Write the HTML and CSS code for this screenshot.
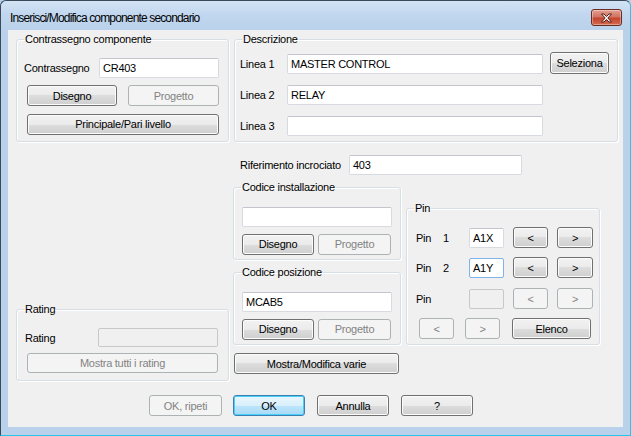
FILE: index.html
```html
<!DOCTYPE html>
<html lang="it">
<head>
    <meta charset="UTF-8">
    <title>Inserisci/Modifica componente secondario</title>
    <link rel="stylesheet" href="styles.css">
</head>
<body>
    <div class="window">
        <div class="titlebar">
            <span class="title">Inserisci/Modifica componente secondario</span>
            <button class="close" title="Chiudi">
                <svg width="29" height="16" viewBox="0 0 29 16">
                    <path d="M9.5 4 L12 4 L14.5 6.5 L17 4 L19.5 4 L15.8 8 L19.5 12 L17 12 L14.5 9.5 L12 12 L9.5 12 L13.2 8 Z" fill="#ffffff" stroke="#5a1a14" stroke-width="1" stroke-linejoin="round"/>
                </svg>
            </button>
        </div>

        <div class="client">
            <!-- top row -->
            <div class="top-row">
                <fieldset class="group g-contrassegno">
                    <legend>Contrassegno componente</legend>
                    <div class="group-body">
                        <div class="row">
                            <label class="lbl lbl-grow">Contrassegno</label>
                            <input class="txt w-contr" type="text" value="CR403">
                        </div>
                        <div class="row row-split mt7">
                            <button class="btn w90">Disegno</button>
                            <button class="btn w91" disabled>Progetto</button>
                        </div>
                        <div class="row mt8">
                            <button class="btn full">Principale/Pari livello</button>
                        </div>
                    </div>
                </fieldset>

                <fieldset class="group g-descrizione">
                    <legend>Descrizione</legend>
                    <div class="group-body">
                        <div class="row">
                            <label class="lbl w-linea">Linea 1</label>
                            <input class="txt w-desc" type="text" value="MASTER CONTROL">
                            <button class="btn btn-sel">Seleziona</button>
                        </div>
                        <div class="row mt11">
                            <label class="lbl w-linea">Linea 2</label>
                            <input class="txt w-desc" type="text" value="RELAY">
                        </div>
                        <div class="row mt11">
                            <label class="lbl w-linea">Linea 3</label>
                            <input class="txt w-desc" type="text" value="">
                        </div>
                    </div>
                </fieldset>
            </div>

            <!-- middle area -->
            <div class="mid-area">
                <div class="left-col">
                    <fieldset class="group g-rating">
                        <legend>Rating</legend>
                        <div class="group-body">
                            <div class="row row-19">
                                <label class="lbl lbl-grow">Rating</label>
                                <input class="txt w-rating" type="text" disabled>
                            </div>
                            <div class="row mt6">
                                <button class="btn full h20" disabled>Mostra tutti i rating</button>
                            </div>
                        </div>
                    </fieldset>
                </div>

                <div class="right-col">
                    <div class="row rif-row">
                        <label class="lbl w-rif">Riferimento incrociato</label>
                        <input class="txt w-rif-txt" type="text" value="403">
                    </div>

                    <div class="lower">
                        <div class="codes-col">
                            <fieldset class="group g-code">
                                <legend>Codice installazione</legend>
                                <div class="group-body">
                                    <input class="txt w-code" type="text" value="">
                                    <div class="row code-btns">
                                        <button class="btn w72">Disegno</button>
                                        <button class="btn w73" disabled>Progetto</button>
                                    </div>
                                </div>
                            </fieldset>
                            <fieldset class="group g-code g-pos">
                                <legend>Codice posizione</legend>
                                <div class="group-body">
                                    <input class="txt w-code" type="text" value="MCAB5">
                                    <div class="row code-btns">
                                        <button class="btn w72">Disegno</button>
                                        <button class="btn w73" disabled>Progetto</button>
                                    </div>
                                </div>
                            </fieldset>
                            <button class="btn btn-varie">Mostra/Modifica varie</button>
                        </div>

                        <fieldset class="group g-pin">
                            <legend>Pin</legend>
                            <div class="group-body">
                                <div class="row pin-row">
                                    <label class="lbl pin-lbl">Pin <span class="pin-num">1</span></label>
                                    <input class="txt w-pin" type="text" value="A1X">
                                    <button class="btn w35 ml9">&lt;</button>
                                    <button class="btn w36 ml9">&gt;</button>
                                </div>
                                <div class="row pin-row mt9">
                                    <label class="lbl pin-lbl">Pin <span class="pin-num">2</span></label>
                                    <input class="txt w-pin focus" type="text" value="A1Y">
                                    <button class="btn w35 ml9">&lt;</button>
                                    <button class="btn w36 ml9">&gt;</button>
                                </div>
                                <div class="row pin-row mt10">
                                    <label class="lbl pin-lbl">Pin</label>
                                    <input class="txt w-pin" type="text" disabled>
                                    <button class="btn w35 ml9" disabled>&lt;</button>
                                    <button class="btn w36 ml9" disabled>&gt;</button>
                                </div>
                                <div class="row pin-row mt9">
                                    <button class="btn w35 ml3" disabled>&lt;</button>
                                    <button class="btn w35 ml11" disabled>&gt;</button>
                                    <button class="btn w79 ml12">Elenco</button>
                                </div>
                            </div>
                        </fieldset>
                    </div>
                </div>
            </div>

            <!-- dialog buttons -->
            <div class="dlg-buttons">
                <button class="btn w73" disabled>OK, ripeti</button>
                <button class="btn btn-default w72">OK</button>
                <button class="btn w72">Annulla</button>
                <button class="btn w72">?</button>
            </div>
        </div>
    </div>
</body>
</html>
```

FILE: styles.css
```css
* {
    box-sizing: border-box;
}

body {
    margin: 0;
    background-color: #b9d1ea;
    font-family: "Liberation Sans", Arial, sans-serif;
    font-size: 11px;
    letter-spacing: -0.25px;
    color: #000000;
}

.window {
    width: 631px;
    height: 436px;
    background-color: #b9d1ea;
    border: 1px solid #3a4a5c;
    border-right-color: #27c6e8;
    border-bottom-color: #27c6e8;
    border-radius: 6px 6px 0 0;
    padding: 0 7px 8px 7px;
    display: flex;
    flex-direction: column;
}

.titlebar {
    height: 29px;
    margin: 0 -7px;
    padding: 0 9px 0 9px;
    display: flex;
    align-items: flex-start;
    justify-content: space-between;
    background: linear-gradient(#d3e3f4 0%, #c2d7ef 45%, #b9d1ea 100%);
    border-radius: 6px 6px 0 0;
}

.title {
    font-family: "Liberation Sans", Arial, sans-serif;
    font-size: 12px;
    line-height: 15px;
    letter-spacing: -0.85px;
    color: #000000;
    margin-top: 10px;
}

.close {
    width: 31px;
    height: 17px;
    padding: 0;
    margin: 8px -1px 0 0;
    border: 1px solid #6b2b22;
    border-radius: 3px;
    background: linear-gradient(#e3a193 0%, #d17361 45%, #c3452f 55%, #d46a4f 100%);
    box-shadow: inset 0 0 0 1px rgba(255, 255, 255, 0.35);
    display: flex;
    align-items: center;
    justify-content: center;
}

.client {
    flex: 1;
    background-color: #f0f0f0;
    padding: 3px 0 0 0;
}

/* group boxes */
.group {
    margin: 0;
    padding: 0;
    border: 1px solid #d5dfe5;
    border-radius: 3px;
    box-shadow: inset 1px 1px 0 #ffffff, 1px 1px 0 #ffffff;
    min-width: 0;
}

.group legend {
    font-size: 11px;
    line-height: 13px;
    padding: 0 1px;
    margin-left: 7px;
}

.group-body {
    display: flex;
    flex-direction: column;
}

.row {
    display: flex;
    align-items: center;
    height: 20px;
}

.row-19 {
    height: 19px;
}

.row-split {
    justify-content: space-between;
    height: 21px;
}

.lbl {
    white-space: nowrap;
}

.lbl-grow {
    flex: 1;
}

/* text boxes */
.txt {
    height: 20px;
    border: 1px solid #d7dae0;
    border-top-color: #c2c5cb;
    border-radius: 2px;
    background-color: #ffffff;
    font-family: "Liberation Sans", Arial, sans-serif;
    font-size: 11px;
    letter-spacing: -0.25px;
    color: #000000;
    padding: 0 3px;
    outline: none;
}

.txt:disabled {
    background-color: #f0f0f0;
    border-color: #c8c8c8;
}

.txt.focus {
    border-color: #7eb4ea;
}

/* buttons */
.btn {
    height: 21px;
    padding: 0;
    border: 1px solid #707070;
    border-radius: 3px;
    background: linear-gradient(#f2f2f2 0%, #ebebeb 50%, #dddddd 50%, #cfcfcf 100%);
    box-shadow: inset 0 0 0 1px #fcfcfc;
    font-family: "Liberation Sans", Arial, sans-serif;
    font-size: 11px;
    letter-spacing: -0.25px;
    color: #000000;
    cursor: pointer;
    flex-shrink: 0;
}

.btn:disabled {
    background: #f4f4f4;
    border-color: #adb2b5;
    box-shadow: none;
    color: #838383;
    cursor: default;
}

.btn-default {
    border-color: #3c7fb1;
    background: linear-gradient(#eaf6fd 0%, #d9f0fc 50%, #bee6fd 50%, #a7d9f5 100%);
    box-shadow: inset 0 0 0 1px #48d0fb;
}

.full { width: 100%; }
.h20 { height: 20px; }
.w35 { width: 35px; }
.w36 { width: 36px; }
.w72 { width: 72px; }
.w73 { width: 73px; }
.w79 { width: 79px; }
.w90 { width: 90px; }
.w91 { width: 91px; }

.mt6 { margin-top: 6px; }
.mt7 { margin-top: 7px; }
.mt8 { margin-top: 8px; }
.mt9 { margin-top: 9px; }
.mt10 { margin-top: 10px; }
.mt11 { margin-top: 11px; }
.ml3 { margin-left: 3px; }
.ml9 { margin-left: 9px; }
.ml11 { margin-left: 11px; }
.ml12 { margin-left: 12px; }

/* top row */
.top-row {
    display: flex;
    margin-left: 8px;
}

.g-contrassegno {
    width: 213px;
    height: 109px;
}

.g-contrassegno .group-body {
    padding: 12px 9px 0 10px;
}

.g-contrassegno .lbl {
    margin-left: -3px;
}

.w-contr {
    width: 120px;
}

.g-descrizione {
    width: 384px;
    height: 109px;
    margin-left: 5px;
}

.g-descrizione .group-body {
    padding: 8px 0 0 5px;
}

.w-linea { width: 47px; }
.w-desc { width: 256px; }

.btn-sel {
    width: 59px;
    height: 22px;
    margin-left: 7px;
    margin-top: -3px;
}

/* middle area */
.mid-area {
    display: flex;
    height: 239px;
}

.left-col {
    width: 225px;
    padding-left: 8px;
    display: flex;
    flex-direction: column;
    justify-content: flex-end;
}

.g-rating {
    width: 213px;
    height: 78px;
}

.g-rating .group-body {
    padding: 12px 10px 0 10px;
}

.g-rating .lbl {
    margin-left: -2px;
}

.w-rating {
    width: 120px;
    height: 19px;
}

.right-col {
    display: flex;
    flex-direction: column;
}

.rif-row {
    margin-top: 13px;
    padding-left: 7px;
}

.w-rif { width: 109px; }
.w-rif-txt { width: 173px; }

.lower {
    display: flex;
}

.codes-col {
    width: 168px;
    display: flex;
    flex-direction: column;
}

.g-code {
    width: 168px;
    height: 79px;
    margin-top: 6px;
}

.g-code .group-body {
    padding: 13px 0 0 8px;
}

.w-code { width: 150px; }

.code-btns {
    height: 22px;
    margin-top: 6px;
    gap: 4px;
}

.btn-varie {
    width: 165px;
    height: 21px;
    margin: 8px 0 0 1px;
}

.g-pin {
    width: 194px;
    height: 143px;
    margin: 27px 0 0 5px;
}

.g-pin .group-body {
    padding: 12px 0 0 9px;
}

.pin-row {
    height: 21px;
}

.pin-lbl {
    width: 53px;
}

.pin-num {
    margin-left: 9px;
}

.w-pin {
    width: 35px;
}

/* dialog buttons */
.dlg-buttons {
    display: flex;
    gap: 12px;
    margin-top: 14px;
    padding-left: 141px;
}

.dlg-buttons .btn:first-child {
    margin-right: -1px;
}
```
